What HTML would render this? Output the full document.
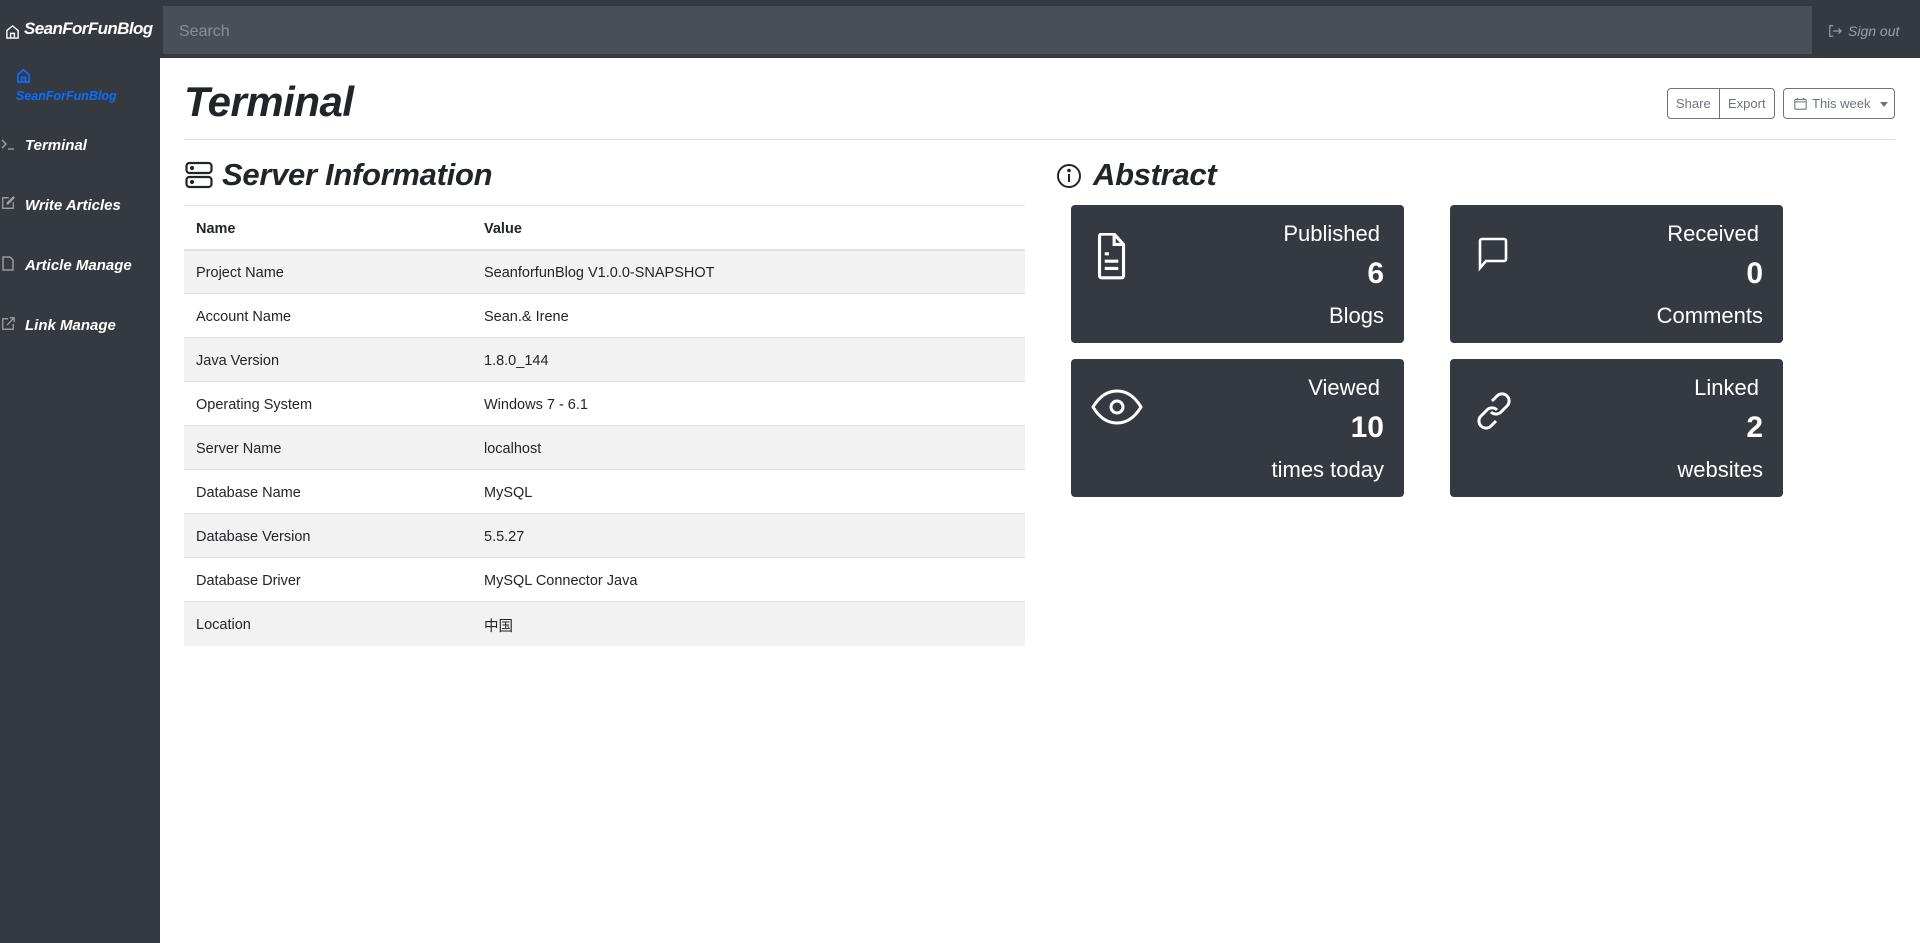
<!DOCTYPE html>
<html><head><meta charset="utf-8"><style>
*{box-sizing:border-box;margin:0;padding:0}
body{width:1920px;height:943px;overflow:hidden;background:#fff;font-family:"Liberation Sans",sans-serif;color:#212529;position:relative}
.nav{position:absolute;left:0;top:0;width:1920px;height:58px;background:#343a40}
.brand{position:absolute;left:6px;top:19px;color:#fff;font-weight:bold;font-style:italic;font-size:17px;letter-spacing:-0.6px}
.search{position:absolute;left:163px;top:6px;width:1649px;height:48px;background:#4a4f57;color:#8a9097;font-size:16px;padding:17px 16px 0}
.signout{position:absolute;left:1828px;top:23px;color:#9aa0a6;font-style:italic;font-size:14px}
.side{position:absolute;left:0;top:58px;width:160px;height:885px;background:#343a40}
.side .it{position:absolute;left:25px;color:#fff;font-weight:bold;font-style:italic;font-size:15px}
.side svg{position:absolute}
h1{position:absolute;left:184px;top:78px;font-size:42px;font-style:italic;font-weight:bold;letter-spacing:-0.5px}
.hr{position:absolute;left:184px;top:139px;width:1711px;height:1px;background:#dee2e6}
.btn{position:absolute;top:88px;height:31px;border:1px solid #6c757d;border-radius:4px;color:#6c757d;font-size:13px}
h2{position:absolute;font-size:31px;font-style:italic;font-weight:bold;letter-spacing:-0.3px}
table{position:absolute;left:184px;top:205px;width:841px;border-collapse:collapse;font-size:14.5px}
td,th{height:44px;padding:3px 12px 0;text-align:left;border-top:1px solid #dee2e6}
th{border-bottom:2px solid #dee2e6;font-weight:bold}
tr.s td{background:#f2f2f2}
td:first-child,th:first-child{width:288px}
.card{position:absolute;width:333px;height:138px;background:#343a40;border-radius:4px;color:#fff;text-align:right;padding-right:20px}
.card .a{position:absolute;right:24px;top:16px;font-size:22px}
.card .n{position:absolute;right:20px;top:52px;font-size:30px;font-weight:bold}
.card .b{position:absolute;right:20px;top:98px;font-size:22px}
.card svg{position:absolute;left:20px;top:28px}
</style></head><body>
<div class="nav">
<svg style="position:absolute;left:5px;top:24px" width="15" height="15" viewBox="0 0 16 16" fill="none" stroke="#fff" stroke-width="1.5"><path d="M2 7l6-5 6 5v8H2z M6 15v-5h4v5"/></svg>
<div class="brand" style="left:24px">SeanForFunBlog</div>
<div class="search">Search</div>
<svg style="position:absolute;left:1828px;top:24px" width="14" height="14" viewBox="0 0 16 16" fill="none" stroke="#9aa0a6" stroke-width="1.3"><path d="M6 2H2v12h4M6 8h9M12 5l3 3-3 3"/></svg>
<div class="signout" style="left:1848px">Sign out</div>
</div>
<div class="side">
<svg style="left:16px;top:10px" width="15" height="15" viewBox="0 0 16 16" fill="none" stroke="#0d6efd" stroke-width="1.8"><path d="M2 7l6-5 6 5v8H2z M6 15v-5h4v5"/></svg>
<div class="it" style="left:16px;top:31px;color:#0d6efd;font-size:12.5px">SeanForFunBlog</div>
<svg style="left:1px;top:80px" width="14" height="12" viewBox="0 0 14 12" fill="none" stroke="#aaa" stroke-width="1.3"><path d="M1 2l4 4-4 4M7 11h6"/></svg>
<div class="it" style="top:79px">Terminal</div>
<svg style="left:1px;top:138px" width="14" height="14" viewBox="0 0 16 16" fill="none" stroke="#aaa" stroke-width="1.3"><path d="M9 2H2v12h12V7M7 9l1 0 7-7-1-1-7 7z"/></svg>
<div class="it" style="top:139px">Write Articles</div>
<svg style="left:2px;top:198px" width="12" height="15" viewBox="0 0 12 15" fill="none" stroke="#aaa" stroke-width="1.3"><path d="M1 1h7l3 3v10H1z"/></svg>
<div class="it" style="top:199px">Article Manage</div>
<svg style="left:1px;top:259px" width="14" height="14" viewBox="0 0 16 16" fill="none" stroke="#aaa" stroke-width="1.3"><path d="M8 2H2v12h12V8M10 1h5v5M15 1L7 9"/></svg>
<div class="it" style="top:259px">Link Manage</div>
</div>
<h1>Terminal</h1>
<div class="btn" style="left:1667px;width:108px"><span style="position:absolute;left:8px;top:7px">Share</span><span style="position:absolute;left:51px;top:0;width:1px;height:29px;background:#6c757d"></span><span style="position:absolute;left:60px;top:7px">Export</span></div>
<div class="btn" style="left:1783px;width:112px">
<svg style="position:absolute;left:10px;top:8px" width="13" height="13" viewBox="0 0 16 16" fill="none" stroke="#6c757d" stroke-width="1.3"><rect x="1" y="3" width="14" height="12" rx="1"/><path d="M1 6h14M4 1v3M12 1v3"/></svg>
<span style="position:absolute;left:28px;top:7px">This week</span>
<span style="position:absolute;left:96px;top:13px;border:4px solid transparent;border-top:5px solid #6c757d"></span></div>
<div class="hr"></div>
<svg style="position:absolute;left:185px;top:161px" width="28" height="28" viewBox="0 0 28 28" fill="none" stroke="#212529" stroke-width="2.2"><rect x="1.5" y="2" width="25" height="10" rx="3"/><rect x="1.5" y="16" width="25" height="10" rx="3"/><circle cx="7" cy="7" r="1" fill="#212529"/><circle cx="7" cy="21" r="1" fill="#212529"/></svg>
<h2 style="left:222px;top:157px">Server Information</h2>
<table>
<tr><th>Name</th><th>Value</th></tr>
<tr class="s"><td>Project Name</td><td>SeanforfunBlog V1.0.0-SNAPSHOT</td></tr>
<tr><td>Account Name</td><td>Sean.&amp; Irene</td></tr>
<tr class="s"><td>Java Version</td><td>1.8.0_144</td></tr>
<tr><td>Operating System</td><td>Windows 7 - 6.1</td></tr>
<tr class="s"><td>Server Name</td><td>localhost</td></tr>
<tr><td>Database Name</td><td>MySQL</td></tr>
<tr class="s"><td>Database Version</td><td>5.5.27</td></tr>
<tr><td>Database Driver</td><td>MySQL Connector Java</td></tr>
<tr class="s"><td>Location</td><td style="font-family:'Liberation Sans','Noto Sans CJK SC',sans-serif">中国</td></tr>
</table>
<svg style="position:absolute;left:1056px;top:163px" width="26" height="26" viewBox="0 0 26 26" fill="none" stroke="#212529" stroke-width="2"><circle cx="13" cy="13" r="11"/><path d="M13 11v8"/><circle cx="13" cy="7.5" r="0.8" fill="#212529"/></svg>
<h2 style="left:1093px;top:157px">Abstract</h2>
<div class="card" style="left:1071px;top:205px"><svg width="40" height="48" viewBox="0 0 28 46" fill="none" stroke="#fff" stroke-width="3"><path d="M3 3a2 2 0 012-2h12l9 10v30a2 2 0 01-2 2H5a2 2 0 01-2-2z M17 1v10h9 M8 20h4 M8 27h13 M8 34h13"/></svg><div class="a">Published</div><div class="n">6</div><div class="b">Blogs</div></div>
<div class="card" style="left:1450px;top:205px"><svg width="44" height="44" viewBox="0 0 30 44" fill="none" stroke="#fff" stroke-width="2.6"><path d="M3 8a2 2 0 012-2h22a2 2 0 012 2v18a2 2 0 01-2 2H9l-6 7z"/></svg><div class="a">Received</div><div class="n">0</div><div class="b">Comments</div></div>
<div class="card" style="left:1071px;top:359px"><svg width="52" height="44" viewBox="0 0 52 44" fill="none" stroke="#fff" stroke-width="3"><path d="M2 20c6-10 14-16 24-16s18 6 24 16c-6 10-14 16-24 16S8 30 2 20z"/><circle cx="26" cy="20" r="6"/></svg><div class="a">Viewed</div><div class="n">10</div><div class="b">times today</div></div>
<div class="card" style="left:1450px;top:359px"><svg width="48" height="48" viewBox="0 0 48 48" fill="none" stroke="#fff" stroke-width="3"><path d="M22 14l5-5a7 7 0 0110 10l-6 6a7 7 0 01-10 0 M26 34l-5 5a7 7 0 01-10-10l6-6a7 7 0 0110 0"/></svg><div class="a">Linked</div><div class="n">2</div><div class="b">websites</div></div>
</body></html>
